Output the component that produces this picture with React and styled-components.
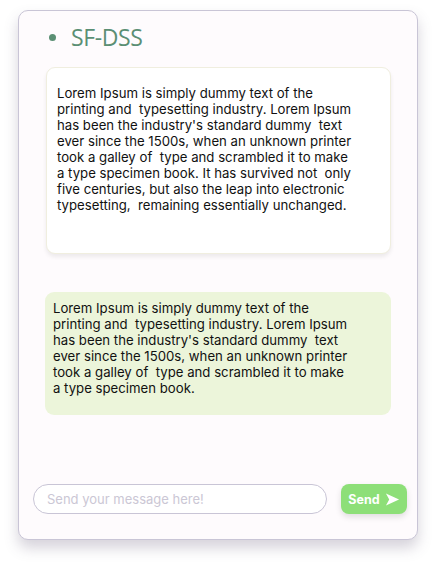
import React from 'react';
import styled, { createGlobalStyle } from "styled-components";

const first = `Lorem Ipsum is simply dummy text of the
printing and  typesetting industry. Lorem Ipsum
has been the industry's standard dummy  text
ever since the 1500s, when an unknown printer
took a galley of  type and scrambled it to make
a type specimen book. It has survived not  only
five centuries, but also the leap into electronic
typesetting,  remaining essentially unchanged.`;

const second = `Lorem Ipsum is simply dummy text of the
printing and  typesetting industry. Lorem Ipsum
has been the industry's standard dummy  text
ever since the 1500s, when an unknown printer
took a galley of  type and scrambled it to make
a type specimen book.`;

export default function App() {
    return (
        <>
            <Global />
            <Page>
                <Card>
                    <Header>
                        <Dot />
                        <Title>SF-DSS</Title>
                    </Header>
                    <Messages>
                        <Bubble>{first}</Bubble>
                        <Bubble $reply>{second}</Bubble>
                    </Messages>
                    <Footer>
                        <Input placeholder="Send your message here!" />
                        <Button>
                            Send
                            <svg width="15" height="15" viewBox="0 0 16 16">
                                <path d="M1 1.5 L15 8 L1 14.5 L4.5 8 Z" fill="#fff" />
                            </svg>
                        </Button>
                    </Footer>
                </Card>
            </Page>
        </>
    )
}

const Global = createGlobalStyle`
    body {
        margin: 0;
        background: #fff;
        font-family: Inter, "Noto Sans", sans-serif;
    }
`;
const Page = styled.div`
    padding: 10px 19px 25px 18px;
`;
const Card = styled.section`
    height: 530px;
    box-sizing: border-box;
    background: #fefbfd;
    border: 1.5px solid #c9c5d6;
    border-radius: 10px;
    box-shadow: 0 8px 14px rgba(90, 80, 110, 0.25);
    display: flex;
    flex-direction: column;
    padding: 0 10px 0 14px;
`;
const Header = styled.div`
    display: flex;
    align-items: center;
    gap: 15px;
    height: 55px;
    padding-left: 16px;
    padding-bottom: 3px;
    box-sizing: border-box;
`;
const Dot = styled.span`
    width: 7px;
    height: 7px;
    border-radius: 50%;
    background: #5b8f74;
`;
const Title = styled.h1`
    margin: 0;
    font-family: "Open Sans", sans-serif;
    font-weight: 400;
    font-size: 23px;
    letter-spacing: -0.4px;
    color: #5b8f74;
`;
const Messages = styled.div`
    flex: 1;
    display: flex;
    flex-direction: column;
    gap: 38px;
    padding: 1px 16px 0 13px;
`;
const Bubble = styled.div`
    font-size: 13.2px;
    line-height: 16px;
    color: #111;
    border-radius: 9px;
    box-sizing: border-box;
    white-space: pre-wrap;
    ${p => p.$reply ? `
        background: #ecf5da;
        padding: 8px 8px 19px 8px;
        margin-left: -1px;
    ` : `
        background: #fff;
        border: 1px solid #f0eedf;
        box-shadow: 0 3px 4px rgba(0,0,0,0.07);
        padding: 17px 10px 0 10px;
        height: 187px;
    `}
`;
const Footer = styled.div`
    display: flex;
    align-items: center;
    gap: 14px;
    height: 56px;
    padding-bottom: 24px;
    box-sizing: border-box;
`;
const Input = styled.input`
    width: 294px;
    height: 30px;
    box-sizing: border-box;
    border: 1px solid #c9c5d6;
    border-radius: 15px;
    background: #fff;
    padding: 0 13px;
    font-family: Inter, sans-serif;
    font-size: 13px;
    outline: none;
    &::placeholder {
        color: #cbc7d5;
    }
`;
const Button = styled.button`
    width: 66px;
    height: 30px;
    border: none;
    border-radius: 8px;
    background: #8ddf78;
    color: #fff;
    font-family: Inter, sans-serif;
    font-weight: 700;
    font-size: 12.5px;
    display: flex;
    align-items: center;
    justify-content: center;
    gap: 5px;
    box-shadow: 0 3px 6px rgba(0,0,0,0.12);
`;
